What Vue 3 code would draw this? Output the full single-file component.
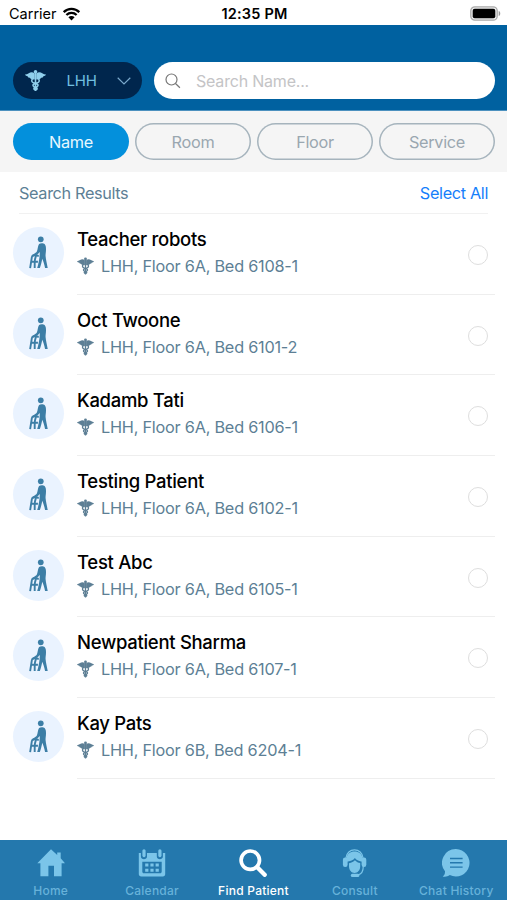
<script setup>
import { ref } from 'vue'

const patients = [
  { name: 'Teacher robots', place: 'LHH, Floor 6A, Bed 6108-1' },
  { name: 'Oct Twoone', place: 'LHH, Floor 6A, Bed 6101-2' },
  { name: 'Kadamb Tati', place: 'LHH, Floor 6A, Bed 6106-1' },
  { name: 'Testing Patient', place: 'LHH, Floor 6A, Bed 6102-1' },
  { name: 'Test Abc', place: 'LHH, Floor 6A, Bed 6105-1' },
  { name: 'Newpatient Sharma', place: 'LHH, Floor 6A, Bed 6107-1' },
  { name: 'Kay Pats', place: 'LHH, Floor 6B, Bed 6204-1' },
]
const filters = ['Name', 'Room', 'Floor', 'Service']
const active = ref('Name')
</script>

<template>
  <div class="screen">
    <!-- shared symbols -->
    <svg class="defs" aria-hidden="true">
      <symbol id="caduceus" viewBox="0 0 20 20">
        <circle cx="10" cy="1.7" r="1.7" />
        <path d="M9.300 3.300C7.300 1.700 5.300 2 3.600 3 2.300 3.700 1.200 4.200 0 4.400c.4 1.100 1.500 1.500 2.500 1.500.2 1 1.200 1.500 2.200 1.500.2.9 1.200 1.400 2.300 1.300.7.500 1.600.5 2.300 0zM10.700 3.300c2-1.600 4-1.300 5.700-.3 1.300.7 2.400 1.200 3.600 1.400-.4 1.100-1.500 1.500-2.500 1.500-.2 1-1.200 1.500-2.200 1.500-.2.900-1.200 1.400-2.300 1.300-.7.500-1.600.5-2.300 0z" />
        <path d="M10 2v18M7.200 8.600c-1.300 1.200-.9 2.900.9 3.600l3.200 1.100c1.500.6 1.500 2-.1 2.700l-1.900.7c-1.100.6-1.100 1.500.1 2.100M12.800 8.600c1.300 1.200.9 2.900-.9 3.600l-3.200 1.100c-1.500.6-1.500 2 .1 2.700l1.900.7c1.100.6 1.100 1.500-.1 2.100" fill="none" stroke="currentColor" stroke-width="1.500" />
      </symbol>
      <symbol id="walker" viewBox="0 0 20 34">
        <circle cx="12.400" cy="3.100" r="3" />
        <path d="M10.600 8c1.400-1.200 4.700-1.200 6 .3 1 1.100 1.300 2.700 1.300 5.200 0 3.400-.7 5.300-.4 7.700.3 3.500 1.400 7.100 2.200 12.200h-2.800c-.6-4.100-1.900-7.200-2.900-9.900-.8 3.900-1.300 6.300-2.600 9.900H8.600c1.300-4.100 2-8.300 2.500-12l.3-4.800-2 1.900-4.900 3.100-1.200-1.700L8 16.500C9.300 14.100 9.100 10.200 10.600 8z" />
        <path d="M1.200 33.400 3 21.800c.2-1.300.8-1.900 2-1.900h3.100c1.100 0 1.600.5 1.700 1.500M2.400 26.800h7M6 33.400V28c0-2 .2-4.400 1.300-7.400" fill="none" stroke="currentColor" stroke-width="2" />
      </symbol>
    </svg>

    <div class="status">
      <span class="carrier">Carrier</span>
      <svg class="wifi" viewBox="0 0 18 14">
        <path d="M1.200 5.100a11.100 11.100 0 0 1 15.600 0M3.900 8a7.300 7.300 0 0 1 10.200 0" fill="none" stroke="#000" stroke-width="2.300" />
        <path d="M9 13.600 5.900 10.300a4.400 4.400 0 0 1 6.200 0z" />
      </svg>
      <span class="time">12:35 PM</span>
      <svg class="battery" viewBox="0 0 31 15">
        <rect x=".8" y=".8" width="26.400" height="13.400" rx="4" fill="#eee" stroke="#aaa" stroke-width="1.300" />
        <rect x="2.700" y="2.800" width="22.600" height="9.500" rx="2" />
        <path d="M28.700 5c2.100.5 2.100 4.500 0 5z" fill="#999" />
      </svg>
    </div>

    <header class="header">
      <button class="site">
        <svg class="site-icon"><use href="#caduceus" /></svg>
        <span>LHH</span>
        <svg class="chevron" viewBox="0 0 14 8"><path d="m.7.8 6.300 6.100L13.300.8" /></svg>
      </button>
      <div class="search">
        <svg class="glass" viewBox="0 0 16 16"><circle cx="6.500" cy="6.500" r="5.500" /><path d="m10.500 10.500 4.400 4.300" /></svg>
        <span>Search Name...</span>
      </div>
    </header>

    <nav class="filters">
      <button v-for="f in filters" :key="f" class="filter" :class="{ on: f === active }" @click="active = f">{{ f }}</button>
    </nav>

    <div class="results-head">
      <span class="label">Search Results</span>
      <span class="all">Select All</span>
    </div>

    <ul class="list">
      <li v-for="p in patients" :key="p.name" class="row">
        <div class="avatar"><svg><use href="#walker" /></svg></div>
        <div class="body">
          <div class="info">
            <div class="name">{{ p.name }}</div>
            <div class="place"><svg><use href="#caduceus" /></svg><span>{{ p.place }}</span></div>
          </div>
          <span class="radio"></span>
        </div>
      </li>
    </ul>

    <footer class="tabs">
      <div class="tab home">
        <svg viewBox="0 0 28 28"><path d="M14 .2 20.200 6V3.500h3.500v5.800L28 14.300h-3.400V27.300H17V16.700h-5.600v10.600H3.400v-13H.3z" /></svg>
        <span>Home</span>
      </div>
      <div class="tab calendar">
        <svg viewBox="0 0 28 28">
          <path fill-rule="evenodd" d="M.8 4h2.100v3.400c0 3.700 6.100 3.700 6.100 0V4h9.800v3.400c0 3.700 6.100 3.700 6.100 0V4h2.300v21c0 1.600-.8 2.500-2.400 2.500H3.300C1.700 27.500.8 26.600.8 25zM4.300 12.700v9.700c0 1.200.6 1.800 1.700 1.800h15.900c1.200 0 1.800-.6 1.800-1.800v-9.700z" />
          <rect x="4.400" y=".2" width="3.200" height="8" rx="1.600" /><rect x="20.300" y=".2" width="3.200" height="8" rx="1.600" />
          <path d="M7.200 14.500h3.200v3H7.200zM12.400 14.500h3.200v3h-3.200zM17.600 14.500h3.200v3h-3.200zM7.200 19.700h3.200v3H7.200zM12.400 19.700h3.200v3h-3.200zM17.600 19.700h3.200v3h-3.200z" />
        </svg>
        <span>Calendar</span>
      </div>
      <div class="tab find">
        <svg viewBox="0 0 28 28"><g fill="none" stroke="currentColor"><circle cx="11.300" cy="11.200" r="9.200" stroke-width="3.700" /><path d="m18 18 7.700 7.800" stroke-width="4.300" stroke-linecap="round" /></g></svg>
        <span>Find Patient</span>
      </div>
      <div class="tab consult">
        <svg viewBox="0 0 28 28">
          <path d="M4.800 9.500C5.800-2 21.200-2 22.200 9.500M22.300 17c0 5-1.300 8.300-5.500 8.900" fill="none" stroke="currentColor" stroke-width="1.200" />
          <path d="M5.400 10C5.800 4.800 9.300 2.600 13.500 2.600s7.700 2.200 8.100 7.400v2.700c-3.400-.3-6.200-1.600-7.700-3.700-1.400 2.100-4.600 3.500-8.500 3.700z" />
          <path d="M8 14.200c2.700-.5 4.700-1.600 5.900-3 1.600 1.600 3.300 2.500 5.300 2.900v3.500c0 3.600-2.600 6.500-5.600 6.500S8 21.200 8 17.600z" />
          <rect x="1.900" y="8.600" width="4.700" height="9.300" rx="2.200" /><rect x="20.600" y="8.600" width="4.700" height="9.300" rx="2.200" />
          <rect x="9.800" y="24.800" width="8.600" height="3.200" rx="1.600" />
        </svg>
        <span>Consult</span>
      </div>
      <div class="tab chat">
        <svg viewBox="0 0 28 28">
          <path d="M14 .1a13.700 13.700 0 1 1-6.200 26C5.700 27.500 3.500 28 .7 27.500c1.800-1.300 2.400-2.500 2.300-5.200A13.700 13.700 0 0 1 14 .1z" />
          <path class="lines" d="M8 9.500h12.600M8 13.800h12.600M8 18.100h12.600" />
        </svg>
        <span>Chat History</span>
      </div>
    </footer>
  </div>
</template>

<style>
body {
  margin: 0;
  background: #fff;
}
</style>

<style scoped>
.screen {
  width: 507px;
  height: 900px;
  display: flex;
  flex-direction: column;
  overflow: hidden;
  background: #fff;
  font-family: Inter, "Liberation Sans", sans-serif;
}
.screen svg {
  display: block;
  flex: none;
  fill: currentColor;
}
.screen .defs {
  position: absolute;
  width: 0;
  height: 0;
}
button {
  font: inherit;
  border: 0;
  padding: 0;
}
.status {
  height: 25px;
  box-sizing: border-box;
  padding: 2px 6px 0 9px;
  display: grid;
  grid-template-columns: 47px 18px 1fr 31px;
  column-gap: 6px;
  align-items: center;
  color: #000;
  font-size: 14.5px;
  white-space: nowrap;
}
.status .wifi {
  width: 19px;
  height: 14px;
}
.time {
  justify-self: center;
  padding-right: 41px;
  font-weight: 600;
  letter-spacing: 0.2px;
}
.battery {
  width: 31px;
  height: 15px;
}
.header {
  height: 86px;
  box-sizing: border-box;
  padding: 37px 12px 12px 13px;
  background: #0061a0;
  border-bottom: 1px solid #4c91bf;
  display: flex;
  gap: 12px;
}
.site {
  width: 129px;
  height: 37px;
  border-radius: 19px;
  background: #00264d;
  color: #70bfe0;
  display: flex;
  align-items: center;
  padding: 0 11px 0 12px;
  font-size: 15px;
}
.site span {
  margin: 0 auto;
  letter-spacing: -0.2px;
}
.screen .site-icon {
  width: 21px;
  height: 21px;
  color: #90d0ed;
}
.screen .chevron {
  width: 14px;
  height: 8px;
  fill: none;
  stroke: #7aa9cc;
  stroke-width: 1.2;
}
.search {
  flex: 1;
  height: 37px;
  border-radius: 19px;
  background: #fff;
  display: flex;
  align-items: center;
  gap: 15px;
  padding-left: 11px;
  color: #c4c4c6;
  font-size: 16px;
  letter-spacing: -0.2px;
}
.screen .glass {
  width: 16px;
  height: 16px;
  fill: none;
  stroke: #777;
  stroke-width: 1.2;
}
.filters {
  height: 61px;
  box-sizing: border-box;
  padding: 12px 12px 12px 13px;
  background: #f5f5f5;
  display: grid;
  grid-template-columns: repeat(4, 1fr);
  gap: 6px;
}
.filter {
  height: 37px;
  box-sizing: border-box;
  box-shadow: inset 0 0 0 1.5px #a6b4bd;
  border-radius: 19px;
  background: transparent;
  color: #9aa7b0;
  font-size: 16.3px;
  letter-spacing: -0.3px;
}
.filter.on {
  background: #0390dc;
  box-shadow: none;
  color: #e8f8ff;
}
.results-head {
  height: 41px;
  margin: 0 19px;
  display: flex;
  align-items: center;
  justify-content: space-between;
  border-bottom: 1px solid #f1f1f1;
  font-size: 16.3px;
}
.label {
  color: #5d7f95;
  letter-spacing: -0.37px;
}
.all {
  color: #147efb;
  letter-spacing: -0.35px;
}
.list {
  list-style: none;
  margin: 0;
  padding: 0 12px 0 13px;
  flex: 1;
}
.row {
  height: 80.7px;
  display: flex;
  gap: 13px;
}
.avatar {
  width: 51px;
  height: 51px;
  margin-top: 13px;
  border-radius: 50%;
  background: #eaf3ff;
  color: #3c7ea6;
  display: grid;
  place-items: center;
}
.avatar svg {
  width: 19px;
  height: 33px;
}
.body {
  flex: 1;
  display: flex;
  justify-content: space-between;
  border-bottom: 1px solid #eee;
}
.info {
  padding-top: 13px;
}
.name {
  line-height: 24px;
  font-size: 18.5px;
  font-weight: 500;
  color: #000;
  letter-spacing: -0.3px;
}
.place {
  height: 24px;
  margin-top: 3px;
  display: flex;
  align-items: center;
  gap: 7px;
  color: #5d7f95;
  font-size: 16.3px;
  letter-spacing: -0.24px;
}
.place svg {
  width: 17px;
  height: 18px;
}
.radio {
  width: 20px;
  height: 20px;
  box-sizing: border-box;
  margin: 31px 7px 0 0;
  border: 1.5px solid #dedede;
  border-radius: 50%;
}
.tabs {
  height: 60px;
  box-sizing: border-box;
  padding-top: 9px;
  background: #2478ad;
  color: #7bc5e9;
  display: grid;
  grid-template-columns: repeat(5, 1fr);
}
.tab {
  display: flex;
  flex-direction: column;
  align-items: center;
  gap: 6px;
  font-size: 12px;
  line-height: 16px;
  font-weight: 500;
  letter-spacing: 0.25px;
  color: #67b2da;
  white-space: nowrap;
}
.tab svg {
  width: 28px;
  height: 28px;
  color: #7bc5e9;
}
.tab.find,
.tab.find svg {
  color: #fff;
}
.lines {
  fill: none;
  stroke: #2478ad;
  stroke-width: 1.4;
}
</style>
